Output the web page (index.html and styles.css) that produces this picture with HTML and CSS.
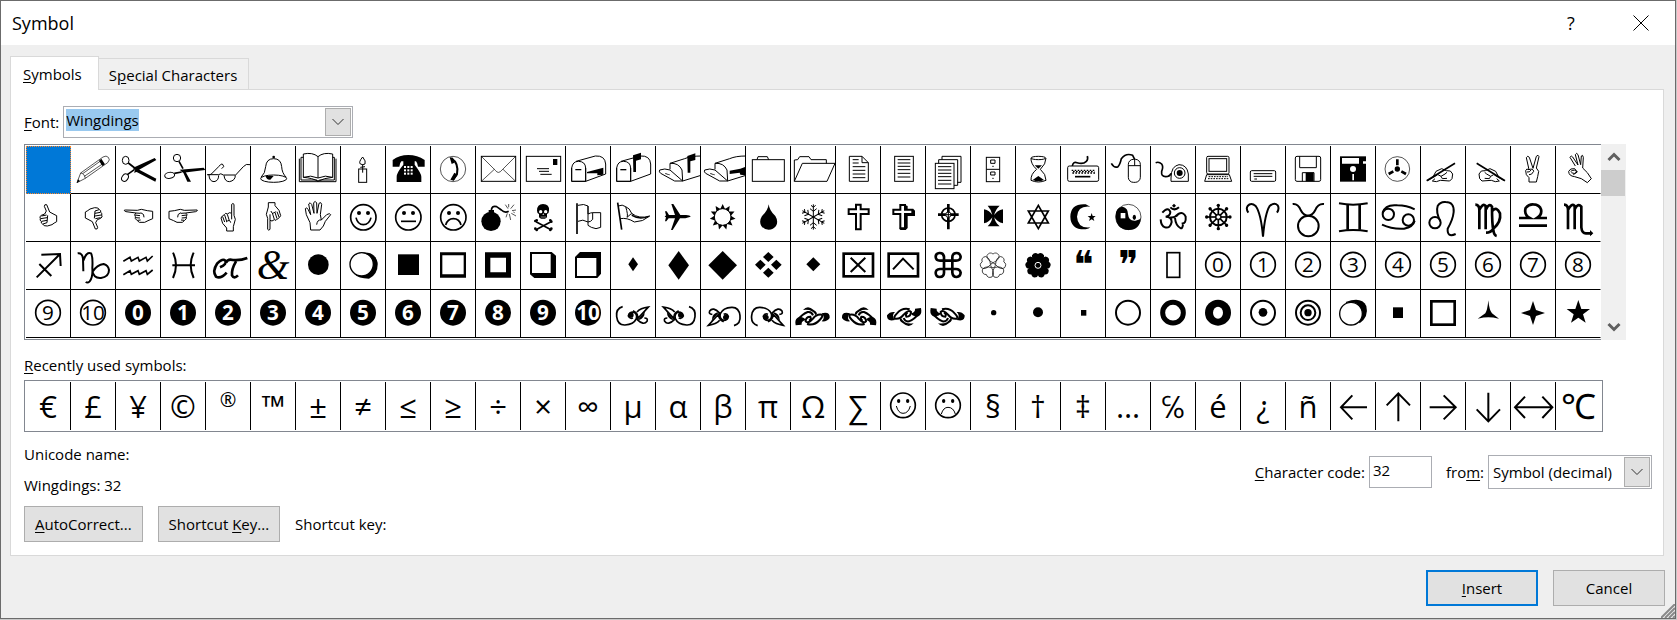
FILE: index.html
```html
<!DOCTYPE html>
<html lang="en">
<head>
    <meta charset="UTF-8">
    <meta name="viewport" content="width=device-width, initial-scale=1.0">
    <title>Symbol</title>
    <link rel="stylesheet" href="styles.css">
</head>
<body>

<div class="dialog" role="dialog" aria-labelledby="dialogTitle">
    <header class="titlebar">
        <h1 id="dialogTitle">Symbol</h1>
        <button type="button" class="caption" aria-label="Help">?</button>
        <button type="button" class="caption" aria-label="Close">
            <svg width="16" height="16" viewBox="0 0 16 16"><path d="M0.5 0.5L15.5 15.5M15.5 0.5L0.5 15.5"/></svg>
        </button>
    </header>

    <div class="tabs" role="tablist">
        <button type="button" class="tab active" role="tab" aria-selected="true"><u>S</u>ymbols</button>
        <button type="button" class="tab" role="tab" aria-selected="false">S<u>p</u>ecial Characters</button>
    </div>

    <main class="panel">
        <div class="font-row">
            <label for="font"><u>F</u>ont:</label>
            <div class="combo combo-font">
                <input type="text" id="font" value="Wingdings">
                <button type="button" class="drop" aria-label="Show fonts">
                    <svg width="14" height="8" viewBox="0 0 14 8"><path d="M1.5 1L7 6.5L12.5 1"/></svg>
                </button>
            </div>
        </div>

        <div class="symbols">
            <div class="symbol-grid" id="symbolGrid"></div>
            <div class="scrollbar">
                <button type="button" aria-label="Scroll up">
                    <svg width="14" height="10" viewBox="0 0 14 10"><path d="M1.5 8L7 2.5L12.5 8"/></svg>
                </button>
                <div class="thumb"></div>
                <button type="button" aria-label="Scroll down">
                    <svg width="14" height="10" viewBox="0 0 14 10"><path d="M1.5 2L7 7.5L12.5 2"/></svg>
                </button>
            </div>
        </div>

        <h2><u>R</u>ecently used symbols:</h2>
        <div class="recent" id="recentGrid"></div>

        <div class="info">
            <div class="names">
                <p>Unicode name:</p>
                <p>Wingdings: 32</p>
            </div>
            <div class="code">
                <label for="code"><u>C</u>haracter code:</label>
                <input type="text" id="code" value="32">
                <label for="from" class="from">fro<u>m</u>:</label>
                <div class="combo combo-from">
                    <select id="from">
                        <option>Symbol (decimal)</option>
                        <option>Symbol (hex)</option>
                    </select>
                    <span class="drop">
                        <svg width="14" height="8" viewBox="0 0 14 8"><path d="M1.5 1L7 6.5L12.5 1"/></svg>
                    </span>
                </div>
            </div>
        </div>

        <div class="actions">
            <button type="button" class="btn"><u>A</u>utoCorrect...</button>
            <button type="button" class="btn">Shortcut <u>K</u>ey...</button>
            <span>Shortcut key:</span>
        </div>
    </main>

    <footer class="footer">
        <button type="button" class="btn wide default"><u>I</u>nsert</button>
        <button type="button" class="btn wide">Cancel</button>
    </footer>
    <svg class="grip" width="14" height="14" viewBox="0 0 14 14"><path d="M0 14L14 0M4 14L14 4M8 14L14 8M12 14L14 12"/></svg>
</div>

<script src="script.js"></script>
</body>
</html>
```
FILE: styles.css
```css
* {
    box-sizing: border-box;
}

body, h1, h2, p {
    margin: 0;
    padding: 0;
}

body {
    background-color: #c8c8c8;
    padding: 0 1px 1px 0;
    font-family: "Open Sans", "Noto Sans", sans-serif;
    font-size: 15px;
    line-height: 22px;
    color: #000;
}

button, input, select {
    font: inherit;
    color: inherit;
    margin: 0;
    padding: 0;
    border: none;
    border-radius: 0;
    background: none;
    outline: none;
}

u {
    text-underline-offset: 2px;
}

svg {
    display: block;
    fill: none;
    stroke: #000;
}

.dialog {
    position: relative;
    min-height: calc(100vh - 1px);
    background-color: #efefef;
    border: 1px solid #6b6b6b;
}

.titlebar {
    display: flex;
    align-items: center;
    height: 44px;
    padding: 0 11px;
    background-color: #fff;
}

h1 {
    flex: 1;
    font-size: 18px;
    font-weight: normal;
}

.caption {
    display: flex;
    align-items: center;
    justify-content: center;
    width: 46px;
    height: 44px;
    font-size: 18px;
}

.caption + .caption {
    margin-left: 24px;
}

/* tabs */
.tabs {
    display: flex;
    align-items: flex-end;
    padding: 11px 11px 0 9px;
}

.tab {
    height: 31px;
    padding: 2px 11px 0 10px;
    border: 1px solid #d9d9d9;
    border-width: 1px 1px 0 0;
    background-color: #f0f0f0;
}

.tab.active {
    z-index: 1;
    height: 34px;
    margin-bottom: -1px;
    padding: 0 16px 0 12px;
    border-left-width: 1px;
    background-color: #fff;
}

.panel {
    margin: 0 11px 0 9px;
    padding: 16px 0 13px 13px;
    border: 1px solid #d9d9d9;
    background-color: #fff;
}

.font-row {
    display: flex;
    align-items: center;
    gap: 4px;
    margin-bottom: 6px;
}

.combo {
    display: flex;
    padding: 1px;
    border: 1px solid #abadb3;
    background-color: #fff;
}

.combo input, .combo select {
    flex: 1;
    min-width: 0;
    appearance: none;
}

.combo-font {
    width: 290px;
    height: 32px;
}

.combo-font input {
    padding: 0 0 5px 1px;
}

.combo-font input::selection {
    background-color: #99c9ef;
    color: #000;
}

.combo-from {
    width: 164px;
    height: 34px;
}

.combo-from select {
    padding-left: 3px;
}

.drop {
    display: flex;
    align-items: center;
    justify-content: center;
    width: 26px;
    border: 1px solid #adadad;
    background-color: #e1e1e1;
}

.drop svg {
    stroke: #333;
}

/* symbol table */
.symbols {
    display: flex;
    height: 196px;
    margin-right: 37px;
}

.symbol-grid {
    flex: 1;
    display: grid;
    grid-template-columns: repeat(auto-fill, 45px);
    grid-auto-rows: 48px;
    padding: 1px 0 1px 1px;
    border: 1px solid #828790;
    border-right: none;
    overflow: hidden;
}

.cell {
    border: 1px solid #000;
    border-width: 0 1px 1px 0;
    overflow: hidden;
}

.symbol-grid .cell:nth-child(35n) {
    border-right-color: #fff;
}

.cell.selected {
    border: 1px dotted #ff8728;
    background-color: #0078d7;
}

.cell svg {
    width: 45px;
    height: 48px;
    stroke-width: 3;
}

.cell .thin {
    stroke-width: 2;
}

.cell .mid {
    stroke-width: 5;
}

.cell .bold {
    stroke-width: 6;
}

.cell .thick {
    stroke-width: 8;
}

.cell .fill {
    fill: #000;
    stroke: none;
}

.cell .white {
    fill: #fff;
    stroke: none;
}

.cell .paper {
    fill: #fff;
}

.cell .outline {
    stroke: #fff;
}

.cell text {
    fill: #000;
    stroke: none;
    font-size: 62px;
    text-anchor: middle;
}

.cell text.light {
    fill: #fff;
    font-weight: bold;
}

.cell text.ten {
    font-family: "Liberation Sans Narrow", "Open Sans", sans-serif;
}

.cell text.quote {
    font-family: "DejaVu Sans", sans-serif;
    font-size: 116px;
}

.cell text.amp {
    font-family: "Liberation Serif", serif;
    font-style: italic;
    font-size: 126px;
}

.scrollbar {
    display: flex;
    flex-direction: column;
    width: 25px;
    background-color: #f0f0f0;
}

.scrollbar button {
    display: flex;
    align-items: center;
    justify-content: center;
    height: 26px;
}

.scrollbar button:last-child {
    margin-top: auto;
}

.scrollbar svg {
    stroke: #606060;
    stroke-width: 3;
}

.thumb {
    height: 26px;
    margin-right: 1px;
    background-color: #cdcdcd;
}

h2 {
    margin: 14px 0 4px;
    font-size: 15px;
    font-weight: normal;
}

.recent {
    display: grid;
    grid-template-columns: repeat(auto-fill, 45px);
    grid-auto-rows: 48px;
    height: 52px;
    margin-right: 60px;
    padding: 1px;
    border: 1px solid #828790;
    overflow: hidden;
}

.recent .cell {
    border-width: 0 1px 0 0;
    font-size: 31px;
    line-height: 48px;
}

.recent .cell.small {
    padding-bottom: 12px;
    font-size: 20px;
    line-height: 36px;
}

.recent .cell:last-child {
    border-right: none;
    font-size: 35px;
}

.recent .arrow {
    stroke-width: 6;
}

.info {
    display: flex;
    align-items: center;
    justify-content: space-between;
    margin: 11px 11px 9px 0;
}

.names {
    display: grid;
    gap: 9px;
    padding-bottom: 1px;
}

.code {
    display: flex;
    align-items: center;
    padding-top: 4px;
}

.code > input {
    width: 63px;
    height: 32px;
    margin-left: 4px;
    padding: 0 0 4px 3px;
    border: 1px solid #abadb3;
}

.from {
    margin: 0 4px 0 14px;
}

.actions {
    display: flex;
    align-items: center;
    gap: 15px;
}

.btn {
    height: 36px;
    padding: 0 10px;
    border: 1px solid #adadad;
    background-color: #e1e1e1;
}

.btn.wide {
    width: 112px;
}

.btn.default {
    border: 2px solid #0078d7;
}

.footer {
    display: flex;
    justify-content: flex-end;
    gap: 15px;
    padding: 14px 10px 12px;
}

.grip {
    position: absolute;
    right: 0;
    bottom: 0;
    stroke: #8a8a8a;
    stroke-width: 2;
}
```
FILE: script.js
```js
// Every drawing uses a 135 x 144 box, three units to a pixel of the 45 x 48 cell.
const path = (d, cls = '') => `<path class="${cls}" d="${d}"/>`;
const hollow = d => `<path class="fill" fill-rule="evenodd" d="${d}"/>`;
const circle = (x, y, r, cls = '') => `<circle class="${cls}" cx="${x}" cy="${y}" r="${r}"/>`;
const rect = (x, y, w, h, cls = '') => `<rect class="${cls}" x="${x}" y="${y}" width="${w}" height="${h}"/>`;
const move = (t, body) => `<g transform="${t}">${body}</g>`;
const mirror = body => move('translate(134 0) scale(-1 1)', body);
const flip = (body, h) => move(`translate(0 ${h}) scale(1 -1)`, body);

const digit = n => circle(66, 68, 37, 'mid') + `<text x="66" y="90"${n > 9 ? ' class="ten"' : ''}>${n}</text>`;
const darkDigit = n => circle(66, 68, 39, 'fill') + `<text x="66" y="90" class="light${n > 9 ? ' ten' : ''}">${n}</text>`;
const face = mouth => circle(67, 70, 38, 'mid') + circle(54, 57, 6, 'fill') + circle(81, 57, 6, 'fill') + path(mouth, 'mid');

const thumb = path('M46 64L56 60L61 51L55 37Q55 30 62 32L71 54L84 61L92 65V83Q84 87 78 92L64 96Q52 97 50 90Q44 88 46 82Q40 79 43 74Q39 67 46 64ZM46 66L62 63M44 74L63 71M47 82L63 79M51 90L63 86L65 64');
const point = path('M25 50Q24 47 29 48L64 49L76 46L94 50L110 52V74L96 80L86 85H70L64 80L58 74L58 68L56 62L60 57L30 53ZM60 57L74 58M57 63L72 65M59 71L72 72M64 79L74 78M74 56Q86 60 84 70');
const pointUp = path('M77 58V31Q81 26 84 31V64L88 76L82 98V111H62V102L50 88L45 72L49 66L55 62L59 58L64 60L71 56L77 58V76M50 68L56 84M56 63L62 82M64 61L70 80M60 84Q72 74 74 86');
const writing = path('M37 91L45 76L62 68L76 74L88 75L95 84L93 98L86 105L58 103L46 107L34 105L42 98M51 86L60 91L72 84L78 79M60 91L64 98L78 97') + path('M17 104L102 52', 'mid') + path('M17 104L44 86L50 88L22 104Z', 'fill');
const mailbox = path('M17 106V66Q20 46 37 46Q58 46 59 66V106ZM30 46L88 30Q117 28 119 54V84L59 106') + path('M17 106V66M17 106H59V66');
const openBox = path('M42 52L86 38Q104 30 135 30M42 52Q68 50 78 72L80 105L135 88M11 72Q26 66 42 72L80 105H56L14 82Q8 78 11 72ZM42 70L42 52') + path('M28 81L42 86V88L28 84Z', 'fill');
const flagUp = path('M66 28L90 20V40L75 44V78H67Z', 'fill');
const sprig = path('M35 50Q14 56 17 80Q20 106 42 105Q68 104 76 86Q80 70 66 66Q54 66 52 78Q56 88 66 84', 'mid') + path('M66 62Q86 72 78 88Q98 108 108 94Q112 84 100 84M78 88L112 51Q88 54 78 66', 'mid') + path('M112 51Q100 62 100 76Q94 90 80 90Q96 72 112 51Z', 'fill') + circle(60, 75, 8, 'fill');
const leaf = path('M13 98Q12 84 26 80Q42 82 44 90Q30 94 32 104L14 106ZM36 60Q50 44 68 60Q84 70 74 76Q64 56 36 60ZM92 70Q118 64 116 84Q108 96 92 94Q104 84 92 70Z', 'fill') + path('M20 90Q34 72 50 66Q62 64 66 76M48 102Q70 108 86 90Q98 78 92 74Q76 72 66 86Q52 102 44 94Q44 80 58 80Q62 88 54 92', 'bold');
const petals = [0, 72, 144, 216, 288].map(a => `<path transform="rotate(${a} 66 70)" d="M66 62Q46 54 48 40Q56 28 66 36Q76 28 84 40Q86 54 66 62Z"/>`).join('');
const spokes = (n, body) => Array.from({ length: n }, (_, i) => `<g transform="rotate(${i * 360 / n} 67 69)">${body}</g>`).join('');
const quote = (ch, x) => `<text class="quote" x="${x}" y="108">${ch}</text>`;

const symbols = [
    // row 1
    ['Space', ''],
    ['Pencil', path('M18 110L29 81L96 33Q106 27 112 34Q119 41 110 50L43 97ZM29 81Q40 82 43 97M35 83L90 44M40 91L97 52', 'thin') + path('M84 44L91 38L102 55L94 60ZM17 111L21 100L27 105Z', 'fill')],
    ['Scissors', `<ellipse cx="29" cy="43" rx="10" ry="12"/><ellipse cx="27" cy="95" rx="9" ry="12" transform="rotate(35 27 95)"/>` + path('M37 51L64 72M34 86L56 70', 'mid') + path('M50 66L116 36L121 42L64 74ZM60 66L121 98L118 107L62 78L54 80Z', 'fill')],
    ['Cutting scissors', circle(48, 36, 11) + `<ellipse cx="26" cy="88" rx="15" ry="9" transform="rotate(-10 26 88)"/>` + path('M54 46L66 68M40 82L62 78', 'mid') + path('M56 71L128 65L133 72L66 80ZM66 78L74 78L90 107H79Z', 'fill')],
    ['Glasses', path('M4 86Q12 88 16 84L38 62Q50 46 53 62L47 68M4 86H38Q44 80 52 87H88M9 88Q10 106 24 107Q38 105 38 88M54 88Q56 107 70 107Q88 104 88 88L112 62Q120 52 132 56')],
    ['Bell', path('M68 38Q46 38 44 62Q43 82 30 94M68 38Q90 38 92 62Q93 82 106 94') + '<ellipse cx="68" cy="98" rx="39" ry="11"/>' + circle(68, 33, 4, 'fill') + path('M44 89L68 90L58 101Q46 102 44 89Z', 'fill')],
    ['Book', path('M66 32V96Q44 86 22 94V24Q50 18 66 32Q82 18 110 24V94Q88 86 66 96M22 34H15V102H62L66 106L70 102H115V34H110M10 38V107H120V38M22 94Q50 96 66 106Q84 96 110 94')],
    ['Candle', rect(53, 69, 24, 40) + path('M65 33Q52 48 58 54Q65 58 72 54Q76 46 65 33M65 55V80M58 64L72 62')],
    ['Telephone', path('M20 62V42Q40 27 67 27Q94 27 116 42V62H96Q94 50 90 46H86V56Q106 82 106 92V108H32V92Q32 80 52 56V46H46Q42 50 40 62Z', 'fill') + [60, 70, 80].map(y => [54, 64, 74].map(x => rect(x, y, 6, 6, 'white')).join('')).join('')],
    ['Telephone in circle', circle(66, 69, 38, 'thin') + path('M62 38Q84 52 78 84L66 102', 'bold') + path('M56 34L66 35L70 50L62 54ZM70 80L80 86L68 104L58 101Z', 'fill')],
    ['Envelope', rect(16, 31, 103, 75) + path('M16 31L58 73Q67 86 78 72L119 31M16 106L55 70M119 106L81 70', 'thin')],
    ['Stamped envelope', rect(16, 31, 103, 75) + rect(96, 39, 13, 18, 'fill') + path('M48 68H84M54 76H84M58 85H92')],
    ['Mailbox', mailbox + path('M63 78L112 65V86L94 88V82L63 82ZM28 69H46V73H28Z', 'fill')],
    ['Mailbox, flag up', mailbox + flagUp + path('M28 69H46V73H28Z', 'fill')],
    ['Open mailbox, flag up', openBox + move('translate(28 2)', flagUp)],
    ['Open mailbox', openBox + path('M86 74L118 68L135 62V88L118 86L116 80L86 84Z', 'fill')],
    ['Folder', rect(19, 41, 96, 65) + path('M33 41L36 32H64L68 41')],
    ['Open folder', path('M10 106V42L20 41L26 32H54L60 41H106V52M10 106H108L132 52H34Z')],
    ['Page', path('M40 31H78L97 50V106H40ZM78 31V50H97M50 41H68M50 51H68M50 62H88M50 73H88M50 84H88M50 95H88')],
    ['Text page', rect(41, 31, 56, 75) + path('M50 41H88M50 51H88M50 61H88M50 71H88M50 82H88M50 93H88')],
    ['Pages', path('M48 41V31H105V109H94M38 52V41H95V118H84') + rect(28, 52, 56, 76) + path('M36 62H76M36 72H76M36 82H76M36 92H76M36 103H76M36 114H76')],
    ['File cabinet', rect(46, 34, 40, 73) + path('M46 70H86M59 42H72V52H59ZM59 78H72V87H59ZM64 61H68M64 97H68')],
    ['Hourglass', '<ellipse cx="67" cy="36" rx="22" ry="5"/>' + path('M45 36Q44 54 62 70Q44 84 45 103Q67 113 90 103Q90 84 73 70Q90 54 90 36') + path('M56 58H78L67 68ZM67 90L84 102Q67 110 50 102Z', 'fill')],
    ['Keyboard', '<rect x="20" y="60" width="93" height="46" rx="5"/>' + path('M34 60Q36 46 48 50Q66 56 76 46Q82 40 79 30', 'mid') + path('M42 92H88', 'mid') + '<path stroke-width="4" stroke-dasharray="5 4" d="M32 73H104M34 81H102"/><path stroke-width="4" stroke-dasharray="5 4" d="M36 77H100"/>'],
    ['Mouse', '<rect x="67" y="40" width="36" height="69" rx="15"/>' + path('M67 59H103M86 40V59') + path('M16 52Q26 68 36 62Q42 56 46 38Q60 20 80 28L86 40', 'mid')],
    ['Trackball', path('M60 96Q60 60 84 56Q108 56 112 84V106H60Z') + circle(86, 81, 16) + circle(86, 81, 9, 'fill') + path('M14 50Q24 46 32 54Q38 62 32 76Q30 92 44 92Q56 92 60 82', 'mid')],
    ['Computer', '<rect x="32" y="31" width="67" height="53" rx="4"/>' + rect(39, 38, 53, 38) + path('M32 86H100L107 106H26Z') + '<path stroke-dasharray="5 3" d="M38 92H96M36 98H100"/>'],
    ['Hard disk', '<rect x="28" y="74" width="76" height="32" rx="4"/>' + path('M38 83H94M38 91H94M40 99H48')],
    ['Floppy disk', '<rect x="28" y="31" width="76" height="75" rx="5"/>' + path('M41 31V65H91V31M49 106V80H84V106') + rect(59, 80, 24, 26, 'fill')],
    ['Large floppy disk', rect(27, 31, 78, 76, 'fill') + path('M33 36H84V53H33ZM64 84H69V103H64ZM96 46H105V53H96Z', 'white') + circle(66, 69, 9, 'white')],
    ['Tape reel', circle(64, 69, 37, 'thin') + circle(64, 69, 8, 'fill') + path('M64 40V58M38 84L52 76M90 84L76 76', 'thick')],
    ['Writing hand', writing],
    ['Writing left hand', mirror(writing)],
    ['Victory hand', path('M54 71L46 35Q50 27 55 34L66 67L76 31Q82 24 84 32L76 66L83 76L80 92L76 108H54V95L46 86L44 74Q46 66 54 71ZM54 71Q66 66 68 76Q62 88 54 86M60 72Q56 80 48 78')],
    ['OK hand', path('M58 60L42 34Q46 26 50 33L66 57L58 26Q62 18 66 26L74 56L76 30Q80 24 82 34L80 66L94 80L106 98L94 110L76 98L56 92Q38 90 38 76Q42 66 56 68L64 78L52 86M44 76Q58 68 62 78Q56 86 46 80')],

    // row 2
    ['Thumbs up', thumb],
    ['Thumbs down', move('translate(135 137) rotate(180)', thumb)],
    ['Pointing left', point],
    ['Pointing right', mirror(point)],
    ['Pointing up', pointUp],
    ['Pointing down', move('translate(134 137) rotate(180)', pointUp)],
    ['Open hand', path('M44 108L42 86L31 62L28 44Q32 38 36 46L44 62L38 30Q42 22 47 31L54 58L53 26Q58 18 62 27L63 58L69 28Q75 22 77 31L73 62L76 78L92 62Q102 56 104 62L88 82L82 96L72 108ZM76 78Q64 76 62 92')],
    ['Smiling face', face('M45 71Q50 92 67 92Q85 92 90 71')],
    ['Neutral face', face('M45 82H90')],
    ['Frowning face', face('M44 93Q50 74 67 74Q85 74 90 93')],
    ['Bomb', circle(45, 82, 29, 'fill') + path('M38 56V48H54V58Z', 'fill') + path('M46 50Q46 34 62 38L76 48Q86 58 98 52', 'mid') + path('M96 44L88 32M98 40V30M104 44L114 32M108 50L120 48M106 58L120 66M100 60L104 78M94 58L90 70M112 54L116 56', 'thin')],
    ['Skull and crossbones', path('M66 30Q86 30 84 50Q84 58 78 60V70L72 74H60L54 70V60Q48 58 48 50Q48 30 66 30Z', 'fill') + circle(59, 53, 5, 'white') + circle(74, 53, 5, 'white') + path('M64 62L67 58L70 62ZM59 68H75V70H59Z', 'white') + path('M45 83L90 107M90 83L45 107', 'mid') + [[43, 81], [47, 79], [88, 79], [91, 83], [43, 104], [47, 108], [88, 108], [91, 104]].map(p => circle(p[0], p[1], 4, 'fill')).join('')],
    ['Flag', path('M33 28V120', 'mid') + path('M36 34Q54 28 66 36V60Q74 56 80 56H104V100Q90 108 76 100L66 94V84Q50 74 36 82M66 36V84Q74 84 80 76V56')],
    ['Pennant', path('M20 26L32 107', 'mid') + path('M22 36Q34 30 44 38Q56 42 62 58Q84 76 116 66Q96 84 70 84Q48 70 28 74M44 38Q52 64 48 70L62 58') + path('M62 60Q84 76 116 66L112 70Q84 80 62 66Z', 'fill')],
    ['Airplane', path('M104 68L88 73H72L50 108H45L57 73H38L31 82H27L30 70L26 68L30 64L27 52H32L39 63H57L46 30H52L73 63H90Q102 64 104 68Z', 'fill')],
    ['Sun', circle(65, 69, 25) + Array.from({ length: 11 }, (_, i) => `<path class="fill" transform="rotate(${i * 360 / 11} 65 69)" d="M65 30L72 45H58Z"/>`).join('')],
    ['Drop', path('M68 31Q70 50 88 66Q98 82 90 96Q82 107 68 107Q54 107 46 96Q38 82 48 66Q66 50 68 31Z', 'fill')],
    ['Snowflake', spokes(6, path('M67 69V31M67 52L57 44M67 52L77 44M67 40L60 34M67 40L74 34'))],
    ['Latin cross', path('M60 32H74V46H98V60H74V106H60V60H38V46H60Z', 'bold')],
    ['Shadowed cross', path('M70 32L80 36V46H98L102 50V66H80V102L74 108H58L56 103L70 60Z', 'fill') + path('M58 33H72V47H94V60H72V103H58V60H37V47H58Z', 'bold paper')],
    ['Celtic cross', path('M67 30V106M36 62H98', 'thick') + circle(67, 62, 20, 'mid') + circle(67, 62, 8, 'paper') + path('M67 54V70M59 62H75')],
    ['Maltese cross', path('M50 35H86Q72 48 70 63Q78 50 96 46V88Q78 84 70 70Q72 86 86 97H50Q62 86 64 70Q56 84 39 88V46Q56 50 64 63Q62 48 50 35Z', 'fill')],
    ['Star of David', path('M67 34L97 87H37ZM67 104L97 51H37Z', 'mid')],
    ['Star and crescent', path('M74 31Q29 28 28 68Q29 108 74 106Q84 104 88 100Q50 104 48 68Q50 34 88 38ZM92 57L95 66H104L97 72L100 81L92 76L84 81L87 72L80 66H89Z', 'fill')],
    ['Yin yang', circle(67, 69, 38, 'thin') + path('M29 66Q28 40 50 38Q66 42 66 60Q68 82 88 80Q104 78 104 70Q104 108 67 108Q30 106 29 66Z', 'fill') + rect(44, 57, 14, 16, 'white') + '<ellipse class="fill" cx="85" cy="70" rx="5" ry="8"/>'],
    ['Om', path('M34 56Q52 36 58 54Q58 66 44 68Q62 68 62 84Q58 104 42 100Q30 96 29 76M58 70Q72 72 82 60Q98 52 104 68Q106 90 92 88M72 72Q74 94 88 102Q94 106 96 92M58 40Q70 52 84 40', 'bold') + path('M69 29L75 35L69 41L63 35Z', 'fill')],
    ['Wheel of dharma', circle(67, 69, 25, 'bold') + circle(67, 69, 9) + spokes(8, path('M67 64V36', 'mid') + circle(67, 34, 5, 'fill'))],
    ['Aries', path('M22 56Q14 44 20 36Q30 24 44 36Q60 58 66 128Q72 58 86 36Q100 24 110 34Q116 44 108 56', 'bold')],
    ['Taurus', path('M20 30Q36 28 44 48Q52 64 66 65Q80 64 88 48Q96 28 114 30', 'bold') + circle(67, 96, 31, 'bold')],
    ['Gemini', path('M24 28Q66 36 110 28M24 112Q66 104 110 112', 'bold') + path('M50 32V107M86 32V107', 'thick')],
    ['Cancer', circle(37, 61, 17, 'bold') + circle(97, 78, 17, 'bold') + path('M20 56Q28 30 64 34Q92 34 116 46M18 92Q48 106 84 104Q112 98 116 80', 'bold')],
    ['Leo', circle(42, 86, 17, 'bold') + path('M58 82Q44 54 50 36Q58 22 74 24Q100 24 98 54Q96 76 80 104Q78 132 104 120', 'bold')],
    ['Virgo', path('M28 32Q40 32 40 48V106M40 48Q50 26 59 36V106M60 46Q70 26 78 38Q78 92 82 108Q84 124 92 126M80 50Q92 36 102 58Q106 84 82 104Q74 116 60 116', 'thick')],
    ['Libra', path('M24 95H108M24 72H56Q38 62 44 42Q54 30 67 31Q86 32 90 46Q94 62 78 72H108', 'thick')],
    ['Scorpio', path('M24 32Q36 32 36 48V106M36 48Q46 26 56 36V106M56 46Q66 26 76 38V100Q78 120 92 118H108', 'thick') + path('M102 108L112 118L102 127Z', 'fill')],

    // row 3
    ['Sagittarius', path('M32 106L102 36M46 38L102 36L104 72M40 66L76 102', 'bold')],
    ['Capricorn', path('M20 34Q34 32 36 50L37 88M37 56Q46 28 60 34Q66 44 64 78Q66 106 56 118Q50 124 44 120M64 84Q66 110 90 108Q114 104 114 84Q112 70 98 66Q78 68 64 90', 'bold')],
    ['Aquarius', path('M22 58L42 46L46 57L66 46L70 57L90 46L94 57L110 42M22 98L42 86L46 97L66 86L70 97L90 86L94 97L110 84', 'mid')],
    ['Pisces', path('M36 32Q54 68 36 108M98 32Q80 68 98 108M34 70H102', 'bold')],
    ['Et', path('M42 76Q64 66 58 56Q50 48 34 64Q18 88 30 104Q44 112 62 92M60 62Q66 50 80 54Q104 56 124 48M90 58Q76 82 78 100Q84 112 96 100', 'thick')],
    ['Ampersand', '<text class="amp" x="66" y="112">&amp;</text>'],
    ['Black circle', circle(67, 68, 31, 'fill')],
    ['Shadowed circle', path('M64 32Q102 28 110 62Q112 96 84 110Q52 110 40 96Z', 'fill') + '<ellipse class="paper" stroke-width="4" cx="62" cy="67" rx="35" ry="35"/>'],
    ['Black square', rect(36, 37, 63, 62, 'fill')],
    ['White square', hollow('M27 31H105V107H27ZM34 40V97H98V40Z')],
    ['Bold white square', hollow('M27 31H105V107H27ZM43 47V91H90V47Z')],
    ['Box, shadow right', path('M27 30H92L105 41V108H40L27 97Z', 'fill') + rect(33, 36, 56, 57, 'white')],
    ['Box, shadow top', path('M27 45L42 30H105V95L94 108H27Z', 'fill') + rect(33, 48, 58, 54, 'white')],
    ['Small lozenge', path('M66 46L81 67L66 88L52 67Z', 'fill')],
    ['Lozenge', path('M68 27L99 70L68 113L37 70Z', 'fill')],
    ['Black diamond', path('M65 27L108 70L65 113L22 70Z', 'fill')],
    ['Four diamonds', path('M67 30L83 45L67 60L51 45ZM43 53L59 68L43 84L27 68ZM91 53L107 68L91 84L75 68ZM67 77L83 92L67 107L51 92Z', 'fill')],
    ['Small diamond', path('M67 46L88 67L67 88L46 67Z', 'fill')],
    ['Crossed box', rect(23, 35, 88, 68, 'thick') + path('M44 47L88 90M88 47L44 90', 'bold')],
    ['Up box', rect(23, 35, 88, 68, 'thick') + path('M36 82L66 50L98 82', 'bold')],
    ['Place of interest', path('M54 56V44Q52 32 40 33Q29 34 29 45Q30 56 42 56H90Q103 56 104 45Q102 33 92 33Q80 33 79 45V92Q80 105 92 105Q103 104 104 92Q102 81 90 81H42Q29 82 29 93Q30 105 41 105Q54 104 54 92Z', 'thick')],
    ['White florette', `<g class="thin">${petals}</g>` + circle(66, 70, 7, 'thin')],
    ['Black florette', `<g class="fill">${petals}${circle(66, 70, 21)}</g>` + circle(66, 70, 9, 'outline')],
    ['Left quotes', quote('\u275D', 68)],
    ['Right quotes', quote('\u275E', 68)],
    ['Blank box', rect(48, 32, 38, 74, 'mid')],
    ...[0, 1, 2, 3, 4, 5, 6, 7, 8].map(n => ['Circled ' + n, digit(n)]),

    // row 4
    ['Circled 9', digit(9)],
    ['Circled 10', digit(10)],
    ...[0, 1, 2, 3, 4, 5, 6, 7, 8, 9, 10].map(n => ['Black circled ' + n, darkDigit(n)]),
    ['Sprig', sprig],
    ['Sprig left', mirror(sprig)],
    ['Sprig down left', move('translate(134 157) rotate(180)', sprig)],
    ['Sprig down', flip(sprig, 157)],
    ['Leaf', leaf],
    ['Leaf left', mirror(leaf)],
    ['Leaf down left', move('translate(134 160) rotate(180)', leaf)],
    ['Leaf down', flip(leaf, 160)],
    ['Dot', circle(68, 68, 8, 'fill')],
    ['Bullet', circle(66, 67, 15, 'fill')],
    ['Square dot', rect(60, 60, 16, 17, 'fill')],
    ['White circle', circle(66, 68, 36, 'bold')],
    ['Bold circle', '<circle cx="66" cy="68" r="31" stroke-width="15"/>'],
    ['Extra bold circle', circle(66, 68, 39, 'fill') + '<ellipse class="white" cx="66" cy="68" rx="15" ry="18"/>'],
    ['Fisheye', circle(66, 68, 36, 'bold') + circle(66, 67, 13, 'fill')],
    ['Bullseye', circle(66, 68, 36, 'bold') + circle(66, 68, 22, 'bold') + circle(66, 68, 11, 'fill')],
    ['Shadowed circle up', path('M44 36Q92 18 106 48Q114 80 86 100Z', 'fill') + '<ellipse class="paper" stroke-width="4" cx="60" cy="71" rx="34" ry="34"/>'],
    ['Small square', rect(51, 52, 30, 32, 'fill')],
    ['Square', '<rect x="31" y="34" width="70" height="70" stroke-width="8"/>'],
    ['Three pointed star', path('M67 31Q70 62 78 70L99 86Q80 82 67 82Q54 82 35 86L58 70Q64 62 67 31Z', 'fill')],
    ['Four pointed star', path('M66 33L75 60L102 69L75 78L66 105L57 78L30 69L57 60Z', 'fill')],
    ['Five pointed star', path('M67 30L76 57H102L81 73L89 98L67 83L45 98L53 73L32 57H58Z', 'fill')]
];

const picture = body => `<svg viewBox="0 0 135 144">${body}</svg>`;
const eyes = '<ellipse class="fill" cx="53" cy="57" rx="5" ry="6"/><ellipse class="fill" cx="80" cy="57" rx="5" ry="6"/>';
const recentFace = mouth => picture(circle(66, 70, 37, 'mid') + eyes + path(mouth));
const arrow = d => picture(path(d, 'arrow'));

const recent = [...'€£¥©®™±≠≤≥÷×∞µαβπΩ∑',
    recentFace('M46 72Q52 94 66 94Q82 94 88 72'),
    recentFace('M46 96Q52 76 66 76Q82 76 88 96'),
    ...'§†‡…℅é¿ñ',
    arrow('M28 76H108M64 40L30 76L64 112'),
    arrow('M67 118V34M32 70L67 34L102 70'),
    arrow('M26 76H106M68 40L104 76L68 112'),
    arrow('M67 32V116M32 82L67 118L102 82'),
    arrow('M10 76H124M42 44L12 76L42 108M94 44L124 76L94 108'),
    '℃'];

document.getElementById('symbolGrid').innerHTML = symbols.map(([name, body], i) =>
    `<button type="button" class="cell${i === 0 ? ' selected' : ''}" aria-label="${name}">${body ? picture(body) : ''}</button>`
).join('');

document.getElementById('recentGrid').innerHTML = recent.map(s =>
    `<button type="button" class="cell${s === '®' ? ' small' : ''}">${s}</button>`
).join('');

const font = document.getElementById('font');
font.focus();
font.select();
```
